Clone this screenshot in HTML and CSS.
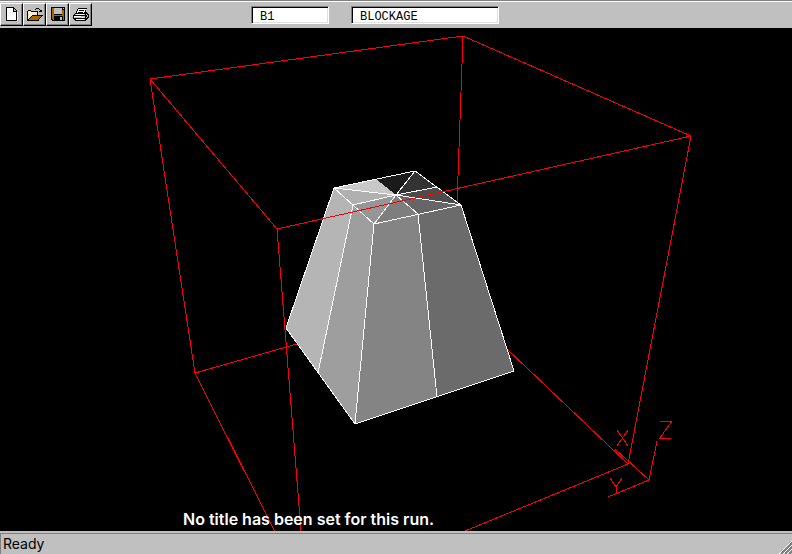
FILE: index.html
```html
<!DOCTYPE html>
<html lang="en">
<head>
<meta charset="utf-8">
<title>Object viewer</title>
<link rel="stylesheet" href="styles.css">
</head>
<body>
<header class="toolbar">
  <div class="tools">
    <button class="tool" type="button" aria-label="New">
      <svg class="icon" viewBox="0 0 16 16"><path fill="#fff" d="M3 1h7v4h4v9H3z"/><path d="M2 0h8v1H3v12h9v1H2zM9 1h1v3h3v10h-1V5H9zM10 1h1v1h-1zM11 2h1v1h-1zM12 3h1v1h-1z"/></svg>
    </button>
    <button class="tool" type="button" aria-label="Open">
      <svg class="icon" viewBox="0 0 16 16"><path fill="#fe6" d="M1 4h3v1h7v4H5v1H4v1H3v1H2v1H1z"/><path fill="#fff" d="M2 4h1v1H2zM1 5h1v1H1zM3 5h1v1H3zM5 5h1v1H5zM7 5h1v1H7zM9 5h1v1H9zM2 6h1v1H2zM4 6h1v1H4zM6 6h1v1H6zM8 6h1v1H8zM3 7h1v1H3zM5 7h1v1H5zM2 8h1v1H2zM4 8h1v1H4zM3 9h1v1H3zM1 9h1v1H1zM2 10h1v1H2z"/><path fill="#a66300" d="M5 9h10v1h-1v1h-1v1h-1v1H2v-1h1v-1h1v-1h1z"/><path d="M1 3h3v1H1zM0 4h1v10H0zM4 4h7v1H4zM10 5h1v3h-1zM5 8h11v1H5zM4 9h1v1H4zM3 10h1v1H3zM2 11h1v1H2zM1 12h1v1H1zM0 13h12v1H0zM15 9h-1v1h1zM14 10h-1v1h1zM13 11h-1v1h1zM12 12h-1v1h1zM9 1h3v1H9zM8 2h1v1H8zM12 2h1v1h-1zM13 3h1v1h-1zM14 2h1v3h-3V4h2V3h1z"/></svg>
    </button>
    <button class="tool" type="button" aria-label="Save">
      <svg class="icon" viewBox="0 0 16 16"><path d="M1 0h14v14H2v-1H1z"/><path fill="#a66300" d="M2 1h2v7h8V3h2v10h-1v-4H4v4H3v-1H2z"/><path fill="#c0c0c0" d="M4 1h8v6H4zM13 1h1v1h-1zM10 10h2v3h-2z"/></svg>
    </button>
    <button class="tool" type="button" aria-label="Print">
      <svg class="icon" viewBox="0 0 16 16"><path d="M5 1h9v1h-1v3h1v1h1v1h1v4h-1v1h-1v1h-1v1H2v-1H1v-1H0V8h1V7h1V6h1V4h1V2h1z"/><path fill="#fff" d="M5 2h8v1h-1v2h-1v1H4V4h1z"/><path d="M6 3h5v1H6zM5 5h5v1H5z"/><path fill="#c0c0c0" d="M3 7h9v1H2V7zM1 9h11v2H1zM3 12h9v1H3zM13 7h1v1h-1zM14 8h1v2h-1zM13 10h1v1h-1z"/><path fill="#fff" d="M3 7h8v1H3zM1 9h7v1H1zM3 12h8v1H3z"/><path fill="#ff0" d="M8 10h3v1H8z"/></svg>
    </button>
  </div>
  <input class="field field-id" type="text" value="B1" aria-label="Object name">
  <input class="field field-type" type="text" value="BLOCKAGE" aria-label="Object type">
</header>
<main class="view">
  <svg class="scene" viewBox="0 28 792 503" role="img" aria-label="Blockage inside the domain">
    <g>
      <g class="wire">
        <path d="M150 79L463 36L691 136L628 464L465 531M150 79L277 229M150 79L195 373L297 344M195 373L275 532M277 229L301 531M463 36L457 204M508 350L628 464"/>
      </g>
      <path fill="#b5b5b5" d="M334 188L353 205L318 373L286 328z"/>
      <path fill="#9e9e9e" d="M353 205L374 224L355 424L318 373z"/>
      <path fill="#848484" d="M374 224L418 214L437 397L355 424z"/>
      <path fill="#6b6b6b" d="M418 214L461 205L514 371L437 397z"/>
      <path fill="#c8c8c8" d="M334 188L376 179L396 195z"/>
      <path fill="#1a1a1a" d="M376 179L415 171L396 195z"/>
      <path fill="#333" d="M415 171L437 187L396 195z"/>
      <path fill="#4c4c4c" d="M437 187L461 205L396 195z"/>
      <path fill="#666" d="M461 205L418 214L396 195z"/>
      <path fill="#7e7e7e" d="M418 214L374 224L396 195z"/>
      <path fill="#969696" d="M374 224L353 205L396 195z"/>
      <path fill="#b0b0b0" d="M353 205L334 188L396 195z"/>
      <path class="edge" d="M334 188L415 171L461 205L374 224zL286 328L355 424L514 371L461 205M374 224L355 424M353 205L318 373M418 214L437 397M334 188L396 195L461 205M353 205L396 195L437 187M374 224L396 195L415 171M396 195L418 214"/>
      <g class="wire">
        <path d="M277 229L691 136"/>
        <path d="M615 449L649 480L657 441M649 480L608 497"/>
        <path d="M617 430L628 446M628 430L617 446M610 478L616 487V494M622 478L616 487M660 421H672L660 438H671"/>
      </g>
    </g>
  </svg>
  <p class="caption">No title has been set for this run.</p>
</main>
<footer class="status">
  <span>Ready</span>
  <svg class="grip" viewBox="0 0 13 13"><path stroke="#fff" d="M0 13L13 0M4 13L13 4M8 13L13 8"/><path stroke="#808080" stroke-width="2" d="M2 13L13 2M6 13L13 6M10 13L13 10"/></svg>
</footer>
</body>
</html>
```
FILE: styles.css
```css
* { box-sizing: border-box; }
body {
  margin: 0;
  height: 100vh;
  display: flex;
  flex-direction: column;
  background: #c0c0c0;
  color: #000;
  font-family: "Liberation Sans", Arial, sans-serif;
  overflow: hidden;
}
.toolbar {
  display: flex;
  align-items: flex-start;
  height: 28px;
  border-top: 1px solid #808080;
  box-shadow: inset 0 1px #fff;
  padding-top: 2px;
}
.tools { display: flex; margin-right: 159px; }
.tool {
  width: 23px;
  height: 23px;
  padding: 2px;
  border: 1px solid;
  border-color: #fff #000 #000 #fff;
  box-shadow: inset -1px -1px #808080;
  background: #c0c0c0;
}
.icon { display: block; width: 16px; height: 16px; margin: 1px; shape-rendering: crispEdges; }
.field {
  height: 18px;
  margin: 3px 22px 0 0;
  padding: 3px 8px 0;
  border: 1px solid;
  border-color: #808080 #fff #fff #808080;
  box-shadow: inset 1px 1px #000, inset -1px -1px #dfdfdf;
  border-radius: 0;
  background: #fff;
  font: 12px "Liberation Mono", "Courier New", monospace;
  outline: 0;
}
.field-id { width: 78px; }
.field-type { width: 148px; }
.view {
  position: relative;
  flex: 1;
  min-height: 0;
  background: #000;
}
.scene { display: block; width: 100%; height: 100%; shape-rendering: crispEdges; }
.wire { fill: none; stroke: #f00; }
.edge { fill: none; stroke: #fff; }
.caption {
  position: absolute;
  left: 183px;
  bottom: 2px;
  margin: 0;
  color: #fff;
  font-family: Inter, sans-serif;
  font-size: 16px;
  font-weight: 600;
  line-height: 20px;
}
.status {
  display: flex;
  justify-content: space-between;
  align-items: flex-end;
  height: 23px;
  margin: 0;
  padding-left: 3px;
  border-top: 2px solid #c0c0c0;
  box-shadow: inset 0 1px #808080, inset 1px 0 #808080;
  font-family: Inter, sans-serif;
  font-size: 14px;
  line-height: 20px;
}
.grip { width: 13px; height: 13px; shape-rendering: crispEdges; }
```
